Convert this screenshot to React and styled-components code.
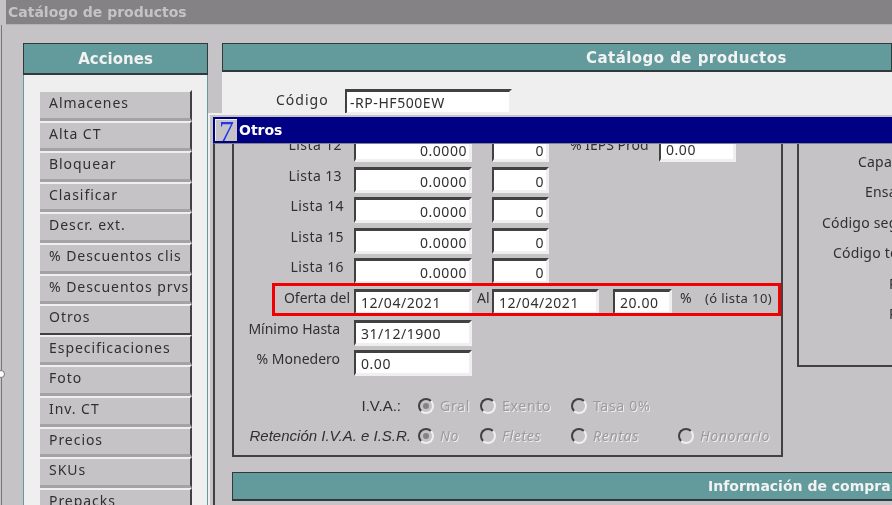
import React from "react";
import styled, { createGlobalStyle } from "styled-components";

const GlobalStyle = createGlobalStyle`
  html, body {
    margin: 0;
    padding: 0;
    background: #c6c3c6;
  }
  * {
    box-sizing: border-box;
  }
`;

const acciones = [
  "Almacenes",
  "Alta CT",
  "Bloquear",
  "Clasificar",
  "Descr. ext.",
  "% Descuentos clis",
  "% Descuentos prvs",
  "Otros",
  "Especificaciones",
  "Foto",
  "Inv. CT",
  "Precios",
  "SKUs",
  "Prepacks",
];

const listas = [
  { name: "Lista 13", end: 0 },
  { name: "Lista 14", end: -2 },
  { name: "Lista 15", end: -2 },
  { name: "Lista 16", end: -2 },
];

const lateral = [
  { text: "Capacidad", left: 59 },
  { text: "Ensamble", left: 66 },
  { text: "Código según", left: 23 },
  { text: "Código tecnología", left: 34 },
  { text: "Peso", left: 90 },
  { text: "Pieza", left: 90 },
];

const App = () => {
  return (
    <Screen>
      <GlobalStyle />
      <Handle />
      <TopBar>Catálogo de productos</TopBar>
      <Workspace>
        <Sidebar>
          <SidebarTitle>Acciones</SidebarTitle>
          <ActionList>
            {acciones.map((a) => (
              <ActionButton key={a} $active={a === "Otros"}>
                {a}
              </ActionButton>
            ))}
          </ActionList>
        </Sidebar>
        <MainPanel>
          <PanelTitle>Catálogo de productos</PanelTitle>
          <CodeRow>
            <CodeLabel>Código</CodeLabel>
            <CodeField>-RP-HF500EW</CodeField>
          </CodeRow>
        </MainPanel>
      </Workspace>

      <Dialog>
        <DialogBar>
          <DialogIcon>7</DialogIcon>
          Otros
        </DialogBar>
        <DialogBody>
          <Columns>
            <PricePanel>
              <FirstRow>
                <Label>Lista 12</Label>
                <Field $right>0.0000</Field>
                <ShortField $right>0</ShortField>
                <IepsLabel>% IEPS Prod</IepsLabel>
                <IepsField>0.00</IepsField>
              </FirstRow>
              {listas.map((l) => (
                <Row key={l.name}>
                  <Label $end={l.end}>{l.name}</Label>
                  <Field $right>0.0000</Field>
                  <ShortField $right>0</ShortField>
                </Row>
              ))}
              <Row>
                <TightLabel $end={-8}>Oferta del</TightLabel>
                <Field>12/04/2021</Field>
                <AlLabel>Al</AlLabel>
                <DateField>12/04/2021</DateField>
                <PercentField>20.00</PercentField>
                <Percent>%</Percent>
                <Note>(ó lista 10)</Note>
                <Highlight />
              </Row>
              <Row>
                <TightLabel $end={2}>Mínimo Hasta</TightLabel>
                <Field>31/12/1900</Field>
              </Row>
              <Row>
                <TightLabel $end={2}>% Monedero</TightLabel>
                <Field>0.00</Field>
              </Row>
              <RadioGrid>
                <RadioLabel>I.V.A.:</RadioLabel>
                <Radio $on>Gral</Radio>
                <Radio>Exento</Radio>
                <Radio>Tasa 0%</Radio>
                <span />
                <RadioLabel $italic $pad={7}>
                  Retención I.V.A. e I.S.R.
                </RadioLabel>
                <Radio $on $italic>
                  No
                </Radio>
                <Radio $italic>Fletes</Radio>
                <Radio $italic>Rentas</Radio>
                <Radio $italic>Honorario</Radio>
              </RadioGrid>
            </PricePanel>
            <SidePanel>
              {lateral.map((l) => (
                <SideLabel key={l.text} $left={l.left}>
                  {l.text}
                </SideLabel>
              ))}
            </SidePanel>
          </Columns>
          <SectionTitle>Información de compra</SectionTitle>
        </DialogBody>
      </Dialog>
    </Screen>
  );
};

const Radio = ({ $on, $italic, children }) => (
  <Option $italic={$italic}>
    <RadioDot $on={$on} />
    <OptionText>{children}</OptionText>
  </Option>
);

const uiFont = `"Noto Sans", "Liberation Sans", sans-serif`;
const boldFont = `"DejaVu Sans", "Liberation Sans", sans-serif`;

const Screen = styled.div`
  position: relative;
  width: 892px;
  height: 505px;
  overflow: hidden;
  background: #c6c3c6;
  font-family: ${uiFont};
  font-size: 14px;
  color: #31302f;
  filter: blur(0.35px);
`;

const Handle = styled.div`
  position: absolute;
  left: -3px;
  top: 370px;
  width: 8px;
  height: 8px;
  border-radius: 50%;
  background: #fff;
  border: 1px solid #777;
  z-index: 3;
`;

const TopBar = styled.div`
  height: 25px;
  margin-left: 6px;
  padding: 3px 0 0 2px;
  background: #848284;
  border-bottom: 1px solid #b5b2b5;
  color: #c6c3c6;
  font-family: ${boldFont};
  font-weight: bold;
  font-size: 14px;
  line-height: 18px;
`;

const Workspace = styled.div`
  display: flex;
  align-items: stretch;
  gap: 14px;
  height: 480px;
  margin-left: 1px;
  padding: 18px 0 0 21px;
  border-left: 1px solid #777;
`;

const Sidebar = styled.div`
  width: 185px;
  flex: none;
  background: #efefef;
  border-left: 1px solid #639a9c;
  border-right: 1px solid #639a9c;
`;

const SidebarTitle = styled.div`
  height: 32px;
  margin: 0 -1px;
  background: #639a9c;
  border: 1px solid #31393a;
  border-bottom-width: 2px;
  color: #f2f2f2;
  font-family: ${boldFont};
  font-weight: bold;
  font-size: 15px;
  line-height: 31px;
  text-align: center;
`;

const ActionList = styled.div`
  display: flex;
  flex-direction: column;
  padding: 15px 15px 0 16px;
`;

const ActionButton = styled.div`
  height: 30.6px;
  flex: none;
  padding-left: 9px;
  background: #c6c3c6;
  border-top: 2px solid #efefef;
  border-right: 2px solid #424142;
  border-bottom: ${(p) => (p.$active ? "2px solid #424142" : "3px solid #a5a2a5")};
  line-height: 22px;
  letter-spacing: 0.95px;
  white-space: nowrap;
  overflow: hidden;
`;

const MainPanel = styled.div`
  flex: 1;
  min-width: 0;
  background: #efefef;
`;

const PanelTitle = styled.div`
  height: 29px;
  padding-left: 363px;
  background: #639a9c;
  border: 1px solid #31393a;
  border-bottom-width: 2px;
  color: #f2f2f2;
  font-family: ${boldFont};
  font-weight: bold;
  font-size: 15px;
  line-height: 29px;
  letter-spacing: 0.45px;
  white-space: nowrap;
`;

const CodeRow = styled.div`
  display: flex;
  padding: 17px 0 0 54px;
`;

const CodeLabel = styled.div`
  width: 54px;
  margin-right: 15px;
  line-height: 22px;
  letter-spacing: 1px;
  white-space: nowrap;
`;

const insetField = `
  height: 26px;
  flex: none;
  background: #fff;
  border-top: 3px solid #424142;
  border-left: 2px solid #424142;
  border-right: 3px solid #efefef;
  border-bottom: 3px solid #efefef;
  letter-spacing: 0.55px;
  white-space: nowrap;
  overflow: hidden;
`;

const CodeField = styled.div`
  ${insetField}
  width: 167px;
  padding-left: 3px;
  line-height: 22px;
`;

const Dialog = styled.div`
  position: absolute;
  left: 208px;
  top: 113px;
  width: 700px;
  height: 400px;
  padding: 2px 0 0 3px;
  background: #c6c3c6;
  border-top: 2px solid #efefef;
  border-left: 2px solid #efefef;
  z-index: 2;
`;

const DialogBar = styled.div`
  display: flex;
  align-items: center;
  gap: 2px;
  height: 26px;
  padding-left: 2px;
  background: #000084;
  color: #fff;
  font-family: ${boldFont};
  font-weight: bold;
  font-size: 14px;
`;

const DialogIcon = styled.div`
  width: 22px;
  height: 22px;
  background: #c6c3c6;
  border-top: 1px solid #efefef;
  border-left: 1px solid #efefef;
  color: #2236f0;
  font-family: "Liberation Serif", serif;
  font-weight: normal;
  font-size: 30px;
  line-height: 22px;
  text-align: center;
`;

const DialogBody = styled.div`
  height: 370px;
  padding-left: 17px;
  border-top: 1px solid #848284;
  border-left: 2px solid #424142;
  overflow: hidden;
`;

const Columns = styled.div`
  display: flex;
  align-items: flex-start;
  gap: 14px;
`;

const PricePanel = styled.div`
  width: 551px;
  height: 313px;
  flex: none;
  border-left: 2px solid #424142;
  border-right: 2px solid #424142;
  border-bottom: 2px solid #424142;
`;

const Row = styled.div`
  position: relative;
  display: flex;
  align-items: flex-start;
  height: 30.6px;
`;

const FirstRow = styled(Row)`
  margin-top: -8px;
`;

const Label = styled.div`
  width: ${(p) => 108 - (p.$end || 0)}px;
  flex: none;
  margin-right: ${(p) => 12 + (p.$end || 0)}px;
  line-height: 18px;
  letter-spacing: 0.4px;
  text-align: right;
  white-space: nowrap;
`;

const TightLabel = styled(Label)`
  letter-spacing: 0;
`;

const Field = styled.div`
  ${insetField}
  width: 118px;
  padding: 0 ${(p) => (p.$right ? "2px" : "5px")};
  line-height: ${(p) => (p.$right ? "23px" : "22px")};
  text-align: ${(p) => (p.$right ? "right" : "left")};
`;

const ShortField = styled(Field)`
  width: 57px;
  margin-left: 20px;
`;

const IepsLabel = styled.div`
  width: 89px;
  margin-left: 21px;
  line-height: 18px;
  white-space: nowrap;
`;

const IepsField = styled(Field)`
  width: 77px;
`;

const AlLabel = styled.div`
  width: 20px;
  padding-left: 5px;
  line-height: 18px;
`;

const DateField = styled(Field)`
  width: 107px;
`;

const PercentField = styled(Field)`
  width: 59px;
  margin-left: 14px;
`;

const Percent = styled.div`
  width: 33px;
  padding-left: 8px;
  line-height: 18px;
`;

const Note = styled.div`
  font-size: 13px;
  line-height: 18px;
  letter-spacing: 0.4px;
  white-space: nowrap;
`;

const Highlight = styled.div`
  position: absolute;
  left: 38px;
  top: -6px;
  width: 509px;
  height: 33px;
  border: 3px solid #f00000;
`;

const RadioGrid = styled.div`
  display: grid;
  grid-template-columns: 184px 62px 91px 107px auto;
  grid-auto-rows: 30px;
  align-items: center;
  margin-top: 10px;
`;

const RadioLabel = styled.div`
  padding-right: ${(p) => (p.$pad === undefined ? 17 : p.$pad)}px;
  font-style: ${(p) => (p.$italic ? "italic" : "normal")};
  font-family: "Liberation Sans", sans-serif;
  font-size: 15px;
  text-align: right;
  white-space: nowrap;
`;

const Option = styled.div`
  display: flex;
  align-items: center;
  gap: 6px;
  font-style: ${(p) => (p.$italic ? "italic" : "normal")};
`;

const RadioDot = styled.div`
  position: relative;
  width: 16px;
  height: 16px;
  flex: none;
  border-radius: 50%;
  border: 2px solid;
  border-color: #424142 #efefef #efefef #424142;
  background: #c6c3c6;
  &::after {
    content: "";
    display: ${(p) => (p.$on ? "block" : "none")};
    position: absolute;
    left: 3px;
    top: 3px;
    width: 6px;
    height: 6px;
    border-radius: 50%;
    background: #848284;
  }
`;

const OptionText = styled.span`
  color: #9c9a9c;
  text-shadow: 1px 1px 0 #efefef;
  letter-spacing: 0.7px;
  white-space: nowrap;
`;

const SidePanel = styled.div`
  flex: 1;
  height: 223px;
  padding-top: 7px;
  border-left: 2px solid #424142;
  border-bottom: 2px solid #424142;
  overflow: hidden;
`;

const SideLabel = styled.div`
  height: 30.4px;
  padding-left: ${(p) => p.$left}px;
  line-height: 22px;
  letter-spacing: 0.2px;
  white-space: nowrap;
`;

const SectionTitle = styled.div`
  height: 29px;
  margin-top: 15px;
  padding-left: 475px;
  background: #639a9c;
  border: 1px solid #31393a;
  border-bottom-width: 2px;
  color: #f2f2f2;
  font-family: ${boldFont};
  font-weight: bold;
  font-size: 14px;
  line-height: 26px;
  white-space: nowrap;
`;

export default App;
